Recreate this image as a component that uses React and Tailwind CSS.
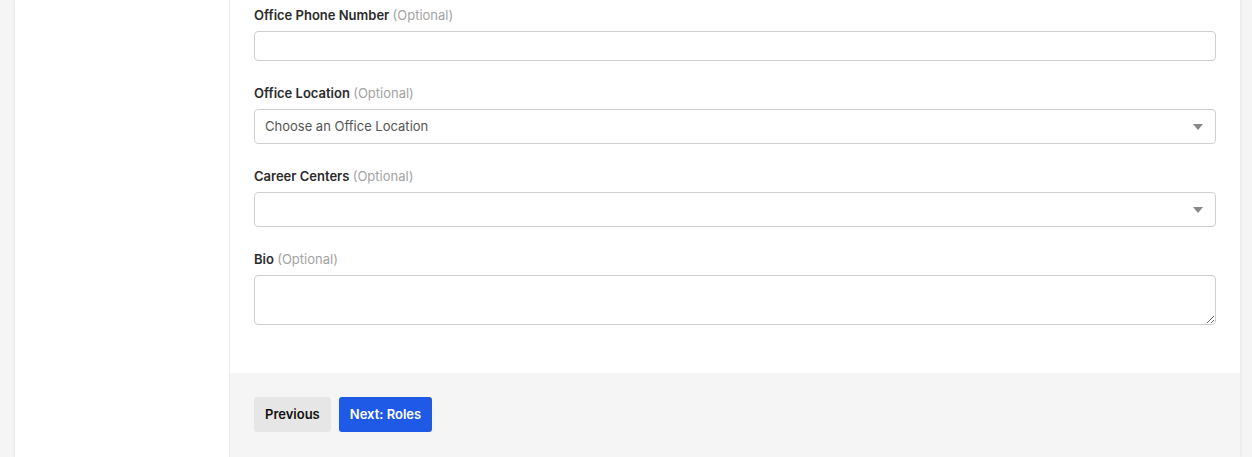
import React from "react";

function Label({ children }) {
    return (
        <label className="block text-[13px] leading-[16px] font-semibold text-[#2b2b2b] mb-2">
            {children} <span className="font-normal text-[#a3a3a3]">(Optional)</span>
        </label>
    );
}

function SelectBox({ value }) {
    return (
        <div className="relative h-[35px] w-full border border-[#cfcfcf] rounded-[4px] bg-white flex items-center px-[10px]">
            <span className="text-[13px] text-[#555]">{value}</span>
            <svg className="absolute right-[12px] top-1/2 -translate-y-1/2" width="10" height="6" viewBox="0 0 10 6">
                <path d="M0 0 L10 0 L5 6 Z" fill="#888" />
            </svg>
        </div>
    );
}

export default function App() {
    return (
        <div
            className="min-h-screen bg-[#f5f5f5] pl-[15px] pr-[12px]"
            style={{ fontFamily: "Inter, 'Liberation Sans', sans-serif" }}
        >
            <div className="bg-white flex min-h-[457px] shadow-[0_0_3px_rgba(0,0,0,0.12)]">
                <aside className="w-[215px] shrink-0 border-r border-[#ececec]" />

                <main className="flex-1 flex flex-col">
                    <div className="px-6 pt-[7px] pb-[48px] flex flex-col gap-6">
                        <div>
                            <Label>Office Phone Number</Label>
                            <input
                                type="text"
                                className="block w-full h-[30px] border border-[#cfcfcf] rounded-[4px] px-[10px] text-[13px] outline-none"
                            />
                        </div>

                        <div>
                            <Label>Office Location</Label>
                            <SelectBox value="Choose an Office Location" />
                        </div>

                        <div>
                            <Label>Career Centers</Label>
                            <SelectBox value="" />
                        </div>

                        <div>
                            <Label>Bio</Label>
                            <textarea
                                className="block w-full h-[50px] border border-[#cfcfcf] rounded-[4px] px-[10px] py-2 text-[13px] outline-none"
                            />
                        </div>
                    </div>

                    <div className="flex-1 bg-[#f5f5f5] px-6 pt-6 pb-6 flex gap-2 items-start">
                        <button className="h-[35px] px-[11px] rounded-[3px] bg-[#e6e6e6] text-[13px] font-semibold text-[#111]">
                            Previous
                        </button>
                        <button className="h-[35px] px-[11px] rounded-[3px] bg-[#1f5ae6] text-[13px] font-semibold text-white">
                            Next: Roles
                        </button>
                    </div>
                </main>
            </div>
        </div>
    );
}
